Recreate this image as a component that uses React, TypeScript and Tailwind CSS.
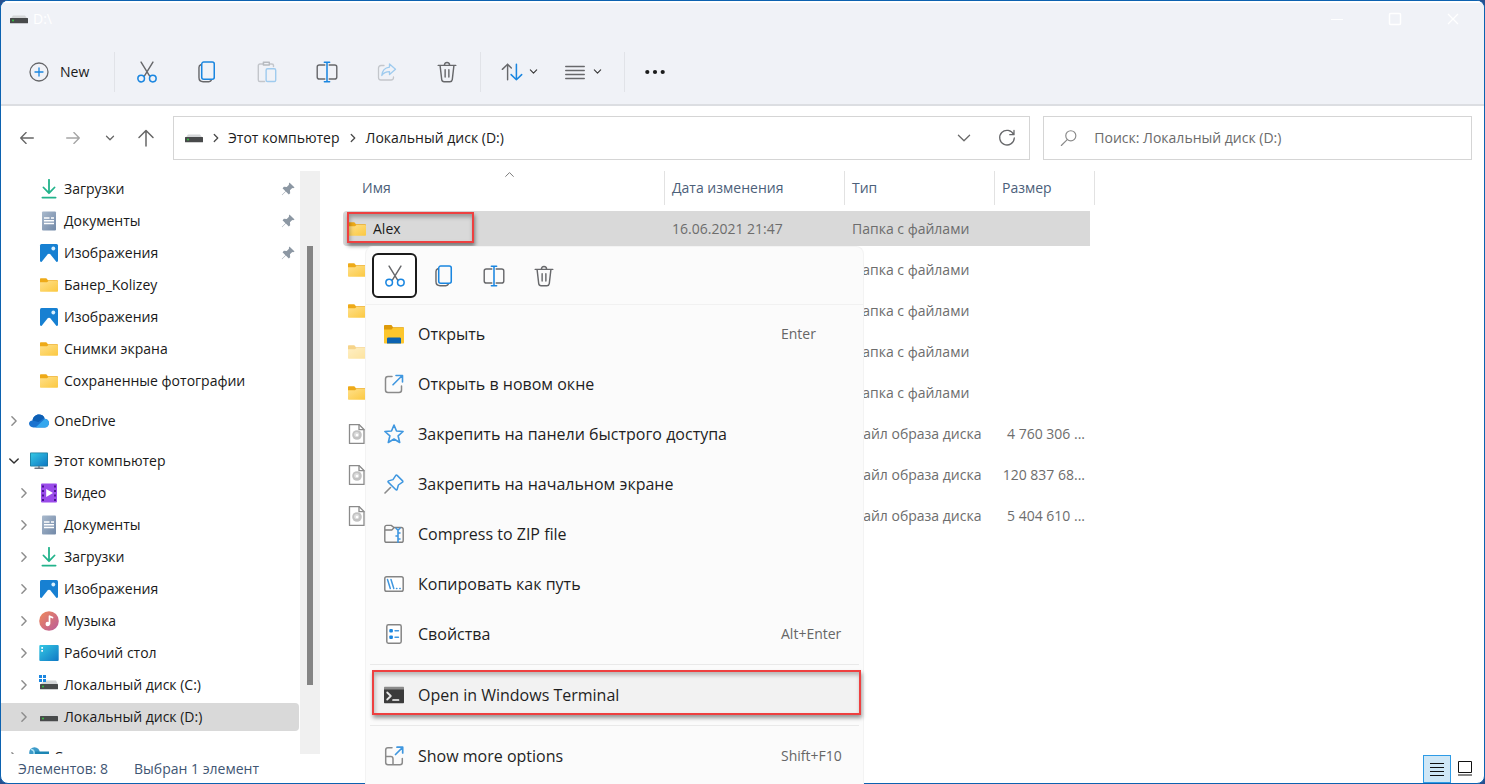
import type { ReactNode } from "react";

const GRAY = "#67686b";
const BLUE = "#1a86e0";

type IconProps = { className?: string };

const Svg = ({ size = 20, className, children }: { size?: number; className?: string; children: ReactNode }) => (
  <svg
    width={size}
    height={size}
    viewBox="0 0 20 20"
    fill="none"
    strokeWidth="1.3"
    strokeLinecap="round"
    strokeLinejoin="round"
    className={`shrink-0 ${className ?? ""}`}
    aria-hidden="true"
  >
    {children}
  </svg>
);

/* ---------- toolbar icons ---------- */

const PlusIcon = () => (
  <Svg>
    <circle cx="10" cy="10" r="9" stroke={GRAY} />
    <path d="M10 6v8M6 10h8" stroke={BLUE} />
  </Svg>
);

const CutIcon = () => (
  <Svg className="h-[22px] w-[22px]">
    <path d="M4.600 1l7.700 12.600M15.400 1L7.700 13.600" stroke={GRAY} />
    <circle cx="4.700" cy="16" r="3" stroke={BLUE} strokeWidth="1.400" />
    <circle cx="15.300" cy="16" r="3" stroke={BLUE} strokeWidth="1.400" />
  </Svg>
);

const CopyIcon = () => (
  <Svg className="h-[22px] w-[22px]">
    <path d="M4.400 3.400C3.200 3.800 2.700 4.600 2.700 5.800V15c0 2.300 1.600 3.800 3.800 3.800h5.200c1.200 0 2-.5 2.300-1.500" stroke={GRAY} />
    <rect x="5.200" y="1" width="11.400" height="15.600" rx="1.800" stroke={BLUE} strokeWidth="1.400" />
  </Svg>
);

const PasteIcon = () => (
  <Svg className="h-[22px] w-[22px]">
    <path d="M7 2.700H3.600c-.9 0-1.500.6-1.500 1.500v13c0 .9.600 1.500 1.500 1.500h4.200M12.500 2.700h1.900c.9 0 1.500.6 1.500 1.500v.9" stroke="#c3c6cb" />
    <path d="M6.700 1.200h5.400v2.400H6.700z" stroke="#b7babf" />
    <rect x="9.200" y="7" width="8.700" height="11.700" rx="1.300" stroke="#9fcbee" />
  </Svg>
);

const RenameIcon = () => (
  <Svg className="h-[22px] w-[22px]">
    <path d="M8 3.600H3C1.800 3.600 1.100 4.300 1.100 5.500v9c0 1.200.7 1.900 1.900 1.900h5M12 3.600h5c1.200 0 1.900.7 1.900 1.900v9c0 1.200-.7 1.900-1.900 1.900h-5" stroke={GRAY} />
    <path d="M10 1.200v17.600M7.600 1.200h4.800M7.600 18.800h4.800" stroke={BLUE} strokeWidth="1.400" />
  </Svg>
);

const ShareIcon = () => (
  <Svg>
    <path d="M7 3.500H4C2.600 3.500 1.500 4.600 1.500 6v9.500C1.500 17 2.600 18 4 18h10c1.400 0 2.500-1 2.500-2.500V15" stroke="#c3c6cb" />
    <path d="M12.500 2l6 5.200-6 5.300V9.600c-3.600 0-6 1.200-7.700 3.900.4-4.900 3-7.800 7.700-8.400z" stroke="#9fcbee" />
  </Svg>
);

const TrashIcon = () => (
  <Svg className="h-[22px] w-[22px]">
    <path d="M2 4h16M7.600 4c0-1.600.9-2.600 2.400-2.600s2.400 1 2.400 2.600M3.700 4l1.500 12.900c.2 1.200 1 1.900 2.100 1.900h5.400c1.100 0 1.900-.7 2.100-1.900L16.300 4M8.300 8v6.500M11.700 8v6.500" stroke={GRAY} />
  </Svg>
);

const SortIcon = () => (
  <Svg className="h-[22px] w-[22px]">
    <path d="M6 17V3M1.200 7.600L6 3l3.400 3.400" stroke={GRAY} />
    <path d="M14 3v14M9.200 12.400L14 17l4.800-4.600" stroke={BLUE} strokeWidth="1.400" />
  </Svg>
);

const LinesIcon = () => (
  <Svg>
    <path d="M.7 4.500h18.600M.7 8.500h18.600M.7 12.500h18.600M.7 16.500h18.600" stroke={GRAY} />
  </Svg>
);

const DotsIcon = () => (
  <Svg>
    <circle cx="2.300" cy="10" r="2.100" fill="#1b1b1b" />
    <circle cx="10" cy="10" r="2.100" fill="#1b1b1b" />
    <circle cx="17.700" cy="10" r="2.100" fill="#1b1b1b" />
  </Svg>
);

/* ---------- arrows ---------- */

const arrows = {
  left: "M17 10H3M9 4l-6 6 6 6",
  right: "M3 10h14M11 4l6 6-6 6",
  up: "M10 18V3M3 9.500L10 2.500l7 7",
  chevronDown: "M3 6.500l7 7 7-7",
  chevronRight: "M6.500 3l7 7-7 7",
  chevronUp: "M3 13.500l7-7 7 7",
};

const Arrow = ({
  kind,
  size = 16,
  width = 1.6,
  className,
}: {
  kind: keyof typeof arrows;
  size?: number;
  width?: number;
  className?: string;
}) => (
  <Svg size={size} className={className}>
    <path d={arrows[kind]} stroke="currentColor" strokeWidth={width} />
  </Svg>
);

const RefreshIcon = () => (
  <Svg>
    <path d="M16.600 6.500A7.300 7.300 0 1 0 17.300 10M17 2.500v4.200h-4.200" stroke={GRAY} />
  </Svg>
);

const SearchIcon = () => (
  <Svg size={18} className="text-[#8a8a8a]">
    <circle cx="12" cy="7.500" r="5.600" stroke="currentColor" />
    <path d="M8 11.800L1.500 18.300" stroke="currentColor" />
  </Svg>
);

/* ---------- file and folder icons ---------- */

const FolderIcon = ({ className }: IconProps) => (
  <Svg className={className}>
    <defs>
      <linearGradient id="folder" x1="0" y1="0" x2="1" y2="1">
        <stop offset="0" stopColor="#ffe08a" />
        <stop offset="1" stopColor="#fbc840" />
      </linearGradient>
    </defs>
    <path d="M1 4.200c0-.7.4-1 1-1h5.300l1.700 2h9c.6 0 1 .4 1 1v4H1z" fill="#eeaa18" />
    <path d="M1 7.200h7l1.500-1.200H18c.6 0 1 .3 1 1v8.700c0 .6-.4 1-1 1H2c-.6 0-1-.4-1-1z" fill="url(#folder)" />
  </Svg>
);

const DownloadIcon = () => (
  <Svg>
    <path d="M10 .8v13M4.500 8.500l5.500 5.700 5.500-5.700M3.400 18.600h13.200" stroke="#22b38b" strokeWidth="1.800" />
  </Svg>
);

const DocumentIcon = () => (
  <Svg>
    <defs>
      <linearGradient id="document" x1="0" y1="0" x2="1" y2="1">
        <stop offset="0" stopColor="#a9b9cc" />
        <stop offset="1" stopColor="#7289a8" />
      </linearGradient>
    </defs>
    <rect x="3" y=".5" width="14" height="19" rx="1" fill="url(#document)" />
    <path d="M5 7h5.500M5 9.800h10M5 12.600h10M12 7h3" stroke="#fff" strokeWidth="1.500" strokeLinecap="butt" />
  </Svg>
);

const PictureIcon = () => (
  <Svg>
    <rect x="1" y="1" width="18" height="18" rx="1.500" fill="#1780d2" />
    <path d="M2.500 19l6-7.600c.8-1 2.200-1 3 0l6 7.600z" fill="#fff" />
    <circle cx="14.300" cy="5.500" r="1.900" fill="#d9f0ff" />
  </Svg>
);

const VideoIcon = () => (
  <Svg>
    <rect x="2" y=".5" width="16" height="19" rx="1" fill="#9a4bea" />
    <path d="M4 2.500v15.500M16 2.500v15.500" stroke="#4a148f" strokeWidth="2" strokeDasharray="2 2.500" strokeLinecap="butt" />
    <path d="M7.200 6v8l6.800-4z" fill="#fff" />
  </Svg>
);

const MusicIcon = () => (
  <Svg>
    <defs>
      <linearGradient id="music" x1="0" y1="0" x2="1" y2="1">
        <stop offset="0" stopColor="#f08a5a" />
        <stop offset="1" stopColor="#b95a9b" />
      </linearGradient>
    </defs>
    <circle cx="10" cy="10" r="9.800" fill="url(#music)" />
    <path d="M10.500 12.800V5.200l3 1.400" stroke="#fff" strokeWidth="1.700" />
    <circle cx="8.700" cy="13" r="2.200" fill="#fff" />
  </Svg>
);

const DesktopIcon = () => (
  <Svg>
    <defs>
      <linearGradient id="desktop" x1="0" y1="0" x2="1" y2="1">
        <stop offset="0" stopColor="#35c8e4" />
        <stop offset="1" stopColor="#0f78c4" />
      </linearGradient>
    </defs>
    <rect x=".3" y="2" width="19.400" height="16" rx="1" fill="url(#desktop)" />
    <path d="M2.300 4.800h1.700M2.300 7.800h1.700" stroke="#fff" strokeWidth="1.700" strokeLinecap="butt" />
  </Svg>
);

const ComputerIcon = () => (
  <Svg>
    <rect x="1" y="1.500" width="18" height="14" rx=".8" fill="#1b7a9c" />
    <rect x="1.800" y="2.300" width="16.400" height="12.400" fill="url(#desktop)" />
    <path d="M10 15.500v1.300M6 17.300h8" stroke="#6a7480" strokeWidth="1.400" />
  </Svg>
);

const CloudIcon = () => (
  <Svg>
    <path d="M3.500 9.500C4 5.900 6.700 3.500 10 3.500c2.800 0 5 1.600 5.900 4.200 2.300.2 4.100 2 4.100 4.300 0 2.500-1.900 4.500-4.500 4.500H4.300C1.900 16.500 0 14.800 0 12.600c0-1.700 1.300-3 3.500-3.100z" fill="#1a73cf" />
    <path d="M6.500 16.500L15.900 7.700c2.300.2 4.100 2 4.100 4.300 0 2.500-1.900 4.500-4.500 4.500z" fill="#35a7ee" />
    <path d="M3.500 9.500C4 5.900 6.700 3.500 10 3.500c2.400 0 4.400 1.200 5.400 3.200L9.500 11z" fill="#0d5fb4" />
  </Svg>
);

const DiskIcon = () => (
  <Svg>
    <path d="M4 6.500h12l3 4H1z" fill="#d4d6d8" />
    <rect x="1" y="9" width="18" height="5.200" rx=".5" fill="#484a4b" />
    <circle cx="4" cy="11.600" r="1" fill="#35c440" />
  </Svg>
);

const SystemDiskIcon = () => (
  <Svg>
    <path d="M6 5.500h11l2 4H1z" fill="#d4d6d8" />
    <path d="M0 0h3v3H0zM4 0h3v3H4zM0 4h3v3H0zM4 4h3v3H4z" fill="#1a86e0" />
    <rect x="1" y="9" width="18" height="5.200" rx=".5" fill="#484a4b" />
    <circle cx="4" cy="11.600" r="1" fill="#35c440" />
  </Svg>
);

const NetworkIcon = () => (
  <Svg>
    <circle cx="5.500" cy="5.500" r="5.300" fill="#3d9ac9" />
    <path d="M2.500 2.500c2 .5 3 2 2.500 4.500" stroke="#a9e2f5" />
    <rect x="6" y="4.500" width="14" height="10" fill="#1c86b4" />
  </Svg>
);

const ImageFileIcon = () => (
  <Svg>
    <path d="M2.500.5H12l5 5v14H2.500z" fill="#fff" stroke="#8b8b8b" />
    <path d="M12 .7v5h5" stroke="#8b8b8b" />
    <circle cx="10" cy="11" r="4.800" fill="#c2c2c2" />
    <circle cx="9.700" cy="10.500" r="2.600" fill="#dcdcdc" />
    <circle cx="10" cy="11" r="1.300" fill="#fff" />
  </Svg>
);

const PinnedIcon = () => (
  <Svg size={14}>
    <path d="M12 .6l7.400 7.400-2.100.9-1.200-.3-3.300 3.300.3 4-1.900 2-4.300-4.300L1.500 19 1 18.500l5.400-5.400-4.200-4.300 2-1.900 4 .3 3.200-3.300-.2-1.200z" fill="#8c97a3" />
  </Svg>
);

/* ---------- context menu icons ---------- */

const OpenFolderIcon = () => (
  <Svg>
    <path d="M0 1.800c0-.6.4-.9.900-.9h6.600l1.500 2.300h10c.6 0 1 .4 1 1v5H0z" fill="#dd9a0a" />
    <path d="M0 5.400h7.500L9 3.700h10.300c.4 0 .7.300.7.700v14c0 .6-.4 1-1 1H1c-.6 0-1-.4-1-1z" fill="#fcc62d" />
    <path d="M3 19.400v-4.400c0-.8.5-1.400 1.400-1.400h11.200c.9 0 1.400.6 1.400 1.400v4.400z" fill="#0c62b0" />
  </Svg>
);

const NewWindowIcon = () => (
  <Svg>
    <path d="M8 2.400H4C2.600 2.400 1.500 3.500 1.500 5v11c0 1.500 1.100 2.500 2.500 2.500h11c1.500 0 2.500-1 2.500-2.500v-4" stroke="#8a8a8a" strokeWidth="1.500" />
    <path d="M9 10.800L18.300 1.500M12 1.500h6.500V8" stroke="#3f97e0" strokeWidth="1.600" />
  </Svg>
);

const StarIcon = () => (
  <Svg>
    <path d="M10 1l2.500 6 6.600.5-5 4.300 1.600 6.700L10 15l-5.700 3.500 1.600-6.700-5-4.300L7.500 7z" stroke="#3f97e0" strokeWidth="1.600" />
  </Svg>
);

const PinIcon = () => (
  <Svg>
    <path d="M6.500 13.500L1 19" stroke="#8a8a8a" strokeWidth="1.600" />
    <path d="M11.800 1.400c.4-.4.900-.4 1.300 0l5.500 5.500c.4.400.3 1-.1 1.300L14.400 11l-1.300 4.500c-.2.600-.8.700-1.200.3L4.200 8.100c-.4-.4-.3-1 .3-1.200L9 5.600z" stroke="#3f97e0" strokeWidth="1.500" />
  </Svg>
);

const ZipIcon = () => (
  <Svg>
    <path d="M.8 6h7l2.500-2.500h7c1.200 0 1.900.8 1.900 1.900v11c0 1.100-.7 1.900-1.900 1.900H2.700c-1.100 0-1.900-.8-1.900-1.900V3.300c0-1.100.8-1.900 1.900-1.900h4.500l2.700 2.100" stroke="#808080" strokeWidth="1.400" />
    <path d="M12 4.200l2 2 2-2M14 6.200v12M14 9h2M14 12h-2M14 15h2" stroke="#3f97e0" strokeWidth="1.600" />
  </Svg>
);

const PathIcon = () => (
  <Svg>
    <rect x=".8" y="2.800" width="18.400" height="14.400" rx="1.800" fill="#fff" stroke="#858585" strokeWidth="1.500" />
    <path d="M3.500 5.500l2.800 9M7 5.500l2.800 9M12.500 14.500h.4M15.800 14.500h.4" stroke="#3f97e0" strokeWidth="1.500" />
  </Svg>
);

const PropertiesIcon = () => (
  <Svg>
    <rect x="2.800" y=".8" width="14.400" height="18.400" rx="1.600" fill="#fff" stroke="#858585" strokeWidth="1.500" />
    <rect x="5.300" y="5" width="3.600" height="3.600" rx="1" fill={BLUE} />
    <rect x="5.300" y="11.500" width="3.600" height="3.600" rx="1" fill={BLUE} />
    <path d="M11 6.800h3.500M11 13.300h3.500" stroke="#3f97e0" strokeWidth="1.400" />
  </Svg>
);

const TerminalIcon = () => (
  <Svg>
    <path d="M1 1.800h18c.6 0 1 .4 1 1V5H0V2.800c0-.6.400-1 1-1z" fill="#8a8a8a" />
    <path d="M0 4.500h20v12.800c0 .6-.4 1-1 1H1c-.6 0-1-.4-1-1z" fill="#3b3b3b" />
    <path d="M3.200 7.500L6.800 11l-3.600 3.500" stroke="#e6e6e6" strokeWidth="1.800" />
    <path d="M9 15h5.500" stroke="#fff" strokeWidth="1.700" />
  </Svg>
);

const MoreOptionsIcon = () => (
  <Svg>
    <path d="M8 1.800H4C2.600 1.800 1.700 2.800 1.700 4v12.500c0 1.200 1 2.200 2.300 2.200h12c1.300 0 2.300-1 2.300-2.200v-4M1.700 10.500h5c1.300 0 2.300 1 2.300 2.200v6" stroke="#8a8a8a" strokeWidth="1.500" />
    <path d="M11.500 8.500l7-7M13 1.200h5.700v5.700" stroke="#3f97e0" strokeWidth="1.700" />
  </Svg>
);

/* ---------- data ---------- */

type NavItem = {
  label: string;
  icon: ReactNode;
  root?: boolean;
  open?: boolean;
  expandable?: boolean;
  pinned?: boolean;
  selected?: boolean;
};

const navItems: NavItem[] = [
  { label: "Загрузки", icon: <DownloadIcon />, pinned: true },
  { label: "Документы", icon: <DocumentIcon />, pinned: true },
  { label: "Изображения", icon: <PictureIcon />, pinned: true },
  { label: "Банер_Kolizey", icon: <FolderIcon /> },
  { label: "Изображения", icon: <PictureIcon /> },
  { label: "Снимки экрана", icon: <FolderIcon /> },
  { label: "Сохраненные фотографии", icon: <FolderIcon /> },
  { label: "OneDrive", icon: <CloudIcon />, root: true, expandable: true },
  { label: "Этот компьютер", icon: <ComputerIcon />, root: true, expandable: true, open: true },
  { label: "Видео", icon: <VideoIcon />, expandable: true },
  { label: "Документы", icon: <DocumentIcon />, expandable: true },
  { label: "Загрузки", icon: <DownloadIcon />, expandable: true },
  { label: "Изображения", icon: <PictureIcon />, expandable: true },
  { label: "Музыка", icon: <MusicIcon />, expandable: true },
  { label: "Рабочий стол", icon: <DesktopIcon />, expandable: true },
  { label: "Локальный диск (C:)", icon: <SystemDiskIcon />, expandable: true },
  { label: "Локальный диск (D:)", icon: <DiskIcon />, expandable: true, selected: true },
  { label: "Сеть", icon: <NetworkIcon />, root: true, expandable: true },
];

const files = [
  { name: "Alex", date: "16.06.2021 21:47", type: "Папка с файлами", size: "", icon: <FolderIcon />, selected: true },
  { name: "", date: "", type: "Папка с файлами", size: "", icon: <FolderIcon /> },
  { name: "", date: "", type: "Папка с файлами", size: "", icon: <FolderIcon /> },
  { name: "", date: "", type: "Папка с файлами", size: "", icon: <FolderIcon className="opacity-50" /> },
  { name: "", date: "", type: "Папка с файлами", size: "", icon: <FolderIcon /> },
  { name: "", date: "", type: "Файл образа диска", size: "4 760 306 ...", icon: <ImageFileIcon /> },
  { name: "", date: "", type: "Файл образа диска", size: "120 837 68...", icon: <ImageFileIcon /> },
  { name: "", date: "", type: "Файл образа диска", size: "5 404 610 ...", icon: <ImageFileIcon /> },
];

const menuItems = [
  { label: "Открыть", hint: "Enter", icon: <OpenFolderIcon /> },
  { label: "Открыть в новом окне", icon: <NewWindowIcon /> },
  { label: "Закрепить на панели быстрого доступа", icon: <StarIcon /> },
  { label: "Закрепить на начальном экране", icon: <PinIcon /> },
  { label: "Compress to ZIP file", icon: <ZipIcon /> },
  { label: "Копировать как путь", icon: <PathIcon /> },
  { label: "Свойства", hint: "Alt+Enter", icon: <PropertiesIcon /> },
];

/* ---------- parts ---------- */

const TitleBar = () => (
  <div className="flex h-[38px] items-center border-t-2 border-white pr-0.5 pb-1 pl-2">
    <DiskIcon />
    <span className="ml-1 text-sm text-white">D:\</span>
    <div className="ml-auto flex text-white">
      <button aria-label="Свернуть" className="flex w-[58px] justify-center">
        <svg width="14" height="14" stroke="currentColor"><path d="M1 7.500h12" /></svg>
      </button>
      <button aria-label="Развернуть" className="flex w-[58px] justify-center">
        <svg width="14" height="14" fill="none" stroke="currentColor" strokeWidth="1.500"><rect x="1.500" y="1.500" width="11" height="11" rx="1" /></svg>
      </button>
      <button aria-label="Закрыть" className="flex w-[58px] justify-center">
        <svg width="14" height="14" stroke="currentColor" strokeWidth="1.300"><path d="M2 2l10 10M12 2L2 12" /></svg>
      </button>
    </div>
  </div>
);

const ToolButton = ({ label, disabled, children }: { label: string; disabled?: boolean; children: ReactNode }) => (
  <button aria-label={label} disabled={disabled} className="flex h-11 w-15 items-center justify-center">
    {children}
  </button>
);

const Divider = () => <div className="h-10 w-px bg-[#e1e3e8]" />;

const Toolbar = () => (
  <div className="flex h-[65px] items-center">
    <button className="flex h-11 w-[113px] items-center gap-[11px] pl-7 text-sm text-[#1b1b1b]">
      <PlusIcon />
      New
    </button>
    <Divider />
    <div className="mr-[3px] ml-0.5 flex">
      <ToolButton label="Вырезать"><CutIcon /></ToolButton>
      <ToolButton label="Копировать"><CopyIcon /></ToolButton>
      <ToolButton label="Вставить" disabled><PasteIcon /></ToolButton>
      <ToolButton label="Переименовать"><RenameIcon /></ToolButton>
      <ToolButton label="Поделиться" disabled><ShareIcon /></ToolButton>
      <ToolButton label="Удалить"><TrashIcon /></ToolButton>
    </div>
    <Divider />
    <div className="flex gap-[3px] pr-2.5 pl-2 text-[#3a3a3a]">
      <button aria-label="Сортировать" className="flex h-11 items-center gap-1.5 px-3">
        <SortIcon />
        <Arrow kind="chevronDown" size={9} width={2.6} />
      </button>
      <button aria-label="Просмотреть" className="flex h-11 items-center gap-2 px-3">
        <LinesIcon />
        <Arrow kind="chevronDown" size={9} width={2.6} />
      </button>
    </div>
    <Divider />
    <ToolButton label="Подробнее"><DotsIcon /></ToolButton>
  </div>
);

const AddressRow = () => (
  <div className="flex h-[65px] shrink-0 items-center pr-3 pb-0.5 pl-[3px] text-[#666]">
    <button aria-label="Назад" className="flex w-[46px] justify-center"><Arrow kind="left" size={18} width={1.5} /></button>
    <button aria-label="Вперед" className="flex w-[46px] justify-center text-[#a5a5a5]"><Arrow kind="right" size={18} width={1.5} /></button>
    <button aria-label="Последние расположения" className="flex w-7 justify-center"><Arrow kind="chevronDown" size={10} width={2.6} /></button>
    <button aria-label="Вверх" className="flex w-11 justify-center"><Arrow kind="up" size={20} width={1.5} /></button>
    <div className="ml-[5px] grid flex-1 grid-cols-[2fr_1fr] gap-[13px]">
      <div className="flex h-11 items-center border border-[#d5d5d5] pr-3 pl-2.5 text-[#1b1b1b]">
        <DiskIcon />
        <Arrow kind="chevronRight" size={10} width={2.6} className="mx-[7px] text-[#4a4a4a]" />
        <a href="#computer" className="text-sm">Этот компьютер</a>
        <Arrow kind="chevronRight" size={10} width={2.6} className="mx-2 text-[#4a4a4a]" />
        <a href="#disk" className="text-sm">Локальный диск (D:)</a>
        <button aria-label="Предыдущие расположения" className="ml-auto p-1 text-[#6a6a6a]"><Arrow kind="chevronDown" /></button>
        <button aria-label="Обновить" className="ml-[21px]"><RefreshIcon /></button>
      </div>
      <label className="flex h-11 items-center gap-4 border border-[#d5d5d5] px-4">
        <SearchIcon />
        <input
          type="search"
          aria-label="Поиск"
          placeholder="Поиск: Локальный диск (D:)"
          className="w-full bg-transparent text-sm outline-none placeholder:text-[#6b6b6b]"
        />
      </label>
    </div>
  </div>
);

const NavRow = ({ item }: { item: NavItem }) => (
  <li className={`flex h-8 items-center ${item.root ? "mt-2" : ""}`}>
    <button
      className={`flex h-7 w-full items-center rounded-r-sm text-sm text-[#191919] ${item.root ? "pl-1.5" : "pl-4"} ${
        item.selected ? "bg-[#d9d9d9]" : ""
      }`}
    >
      <span className="mr-2 flex w-3.5 justify-center">
        {item.expandable && (
          <Arrow
            kind={item.open ? "chevronDown" : "chevronRight"}
            size={12}
            width={2.4}
            className={item.open ? "text-[#303030]" : "text-[#8c8c8c]"}
          />
        )}
      </span>
      {item.icon}
      <span className="ml-[5px]">{item.label}</span>
      {item.pinned && (
        <span className="mr-1 ml-auto">
          <PinnedIcon />
        </span>
      )}
    </button>
  </li>
);

const Sidebar = () => (
  <div className="flex w-[319px] shrink-0">
    <nav className="w-[298px] overflow-hidden">
      <ul className="pt-0.5">
        {navItems.map((item, i) => (
          <NavRow key={i} item={item} />
        ))}
      </ul>
    </nav>
    <div className="ml-px flex flex-1 flex-col items-center bg-[#f0f0f0]">
      <div className="flex-75" />
      <div className="w-1.5 flex-439 bg-[#858585]" />
      <div className="flex-69" />
    </div>
  </div>
);

const FileTable = () => (
  <table className="ml-[23px] w-[752px] table-fixed border-separate border-spacing-x-0 border-spacing-y-1.5 text-left text-sm text-[#6d6d6d]">
    <colgroup>
      <col />
      <col className="w-[180px]" />
      <col className="w-[150px]" />
      <col className="w-[100px]" />
    </colgroup>
    <thead className="text-[#4c607a]">
      <tr className="h-[34px]">
        <th className="relative border-r border-[#e2e2e2] pl-[19px] font-normal">
          Имя
          <Arrow kind="chevronUp" size={11} width={1.6} className="absolute -top-0.5 left-[161px] text-[#6a6a6a]" />
        </th>
        <th className="border-r border-[#e2e2e2] pl-[7px] font-normal">Дата изменения</th>
        <th className="border-r border-[#e2e2e2] pl-[7px] font-normal">Тип</th>
        <th className="border-r border-[#e2e2e2] pl-[7px] font-normal">Размер</th>
      </tr>
    </thead>
    <tbody>
      {files.map((file, i) => (
        <tr key={i} className={`h-[35px] ${file.selected ? "[&>td]:bg-[#d9d9d9]" : ""}`}>
          <td className="relative rounded-l-sm pl-1">
            <span className="flex items-center gap-1.5 text-[#191919]">
              {file.icon}
              {file.name}
            </span>
            {file.selected && (
              <span className="absolute top-px left-1 h-[31px] w-[127px] border-2 border-[#ee4040] shadow-[1px_3px_4px_rgba(0,0,0,0.45),inset_1px_3px_4px_rgba(0,0,0,0.3)]" />
            )}
          </td>
          <td className="pl-[7px]">{file.date}</td>
          <td className="pl-[7px]">{file.type}</td>
          <td className="border-r-5 border-transparent bg-clip-padding pr-[5px] text-right">{file.size}</td>
        </tr>
      ))}
    </tbody>
  </table>
);

const MenuItem = ({ label, hint, icon, active }: { label: string; hint?: string; icon: ReactNode; active?: boolean }) => (
  <button role="menuitem" className="relative flex h-[50px] w-full items-center px-[18px] text-left text-base text-[#1f1f1f]">
    {active && (
      <span className="absolute top-0 right-0.5 left-1.5 h-[45px] border-2 border-[#ee4040] bg-[#f2f2f2] shadow-[1px_3px_4px_rgba(0,0,0,0.4),inset_1px_3px_4px_rgba(0,0,0,0.25)]" />
    )}
    <span className="relative">{icon}</span>
    <span className="relative ml-3.5 flex-1">{label}</span>
    {hint && <span className="w-16 text-sm whitespace-nowrap text-[#666]">{hint}</span>}
  </button>
);

const ContextMenu = () => (
  <div role="menu" className="absolute top-[246px] left-[365px] w-[499px] rounded-t-lg border border-b-0 border-[#f3f3f3] bg-[#fbfbfb] pb-1">
    <div className="flex px-1.5 py-1.5">
      <button aria-label="Вырезать" className="flex size-[45px] items-center justify-center rounded-md border-2 border-[#1b1b1b] bg-white">
        <CutIcon />
      </button>
      <div className="ml-0.5 flex">
        <button aria-label="Копировать" className="flex h-[45px] w-[50px] items-center justify-center"><CopyIcon /></button>
        <button aria-label="Переименовать" className="flex h-[45px] w-[50px] items-center justify-center"><RenameIcon /></button>
        <button aria-label="Удалить" className="flex h-[45px] w-[50px] items-center justify-center"><TrashIcon /></button>
      </div>
    </div>
    <div className="mb-1 h-px bg-[#f1f1f1]" />
    {menuItems.map((item) => (
      <MenuItem key={item.label} {...item} />
    ))}
    <div className="mx-1 my-[5px] h-px bg-[#e9e9e9]" />
    <MenuItem label="Open in Windows Terminal" icon={<TerminalIcon />} active />
    <div className="mx-1 my-[5px] h-px bg-[#e9e9e9]" />
    <MenuItem label="Show more options" hint="Shift+F10" icon={<MoreOptionsIcon />} />
  </div>
);

const StatusBar = () => (
  <div className="flex h-[29px] shrink-0 items-center gap-[26px] pl-[17px] text-sm text-[#3f5673]">
    <span>Элементов: 8</span>
    <span>Выбран 1 элемент</span>
    <div className="mr-[11px] ml-auto flex items-center gap-1.5">
      <button aria-label="Таблица" className="flex size-7 items-center justify-center border border-[#2e9be6] bg-[#cfe7f6]">
        <svg width="16" height="14" stroke="#111"><path d="M1 1.500h14M1 5.500h14M1 9.500h14M1 13.500h14" /></svg>
      </button>
      <button aria-label="Крупные значки">
        <svg width="16" height="15" fill="none" stroke="#111"><path d="M1.500.5h13v11h-13zM1 14h14" /></svg>
      </button>
    </div>
  </div>
);

export default function App() {
  return (
    <div className="relative h-screen overflow-hidden bg-[#27508f] font-['Open_Sans','Noto_Sans',sans-serif]">
      <div className="flex h-full flex-col overflow-hidden rounded-lg border border-[#0c62b0] bg-white">
        <header className="shrink-0 border-b-2 border-[#dcdee2] bg-[#f0f2f7]">
          <TitleBar />
          <Toolbar />
        </header>
        <AddressRow />
        <main className="flex min-h-0 flex-1 items-stretch overflow-hidden">
          <Sidebar />
          <div className="-mt-1.5 min-w-0 flex-1">
            <FileTable />
          </div>
        </main>
        <StatusBar />
      </div>
      <ContextMenu />
    </div>
  );
}
